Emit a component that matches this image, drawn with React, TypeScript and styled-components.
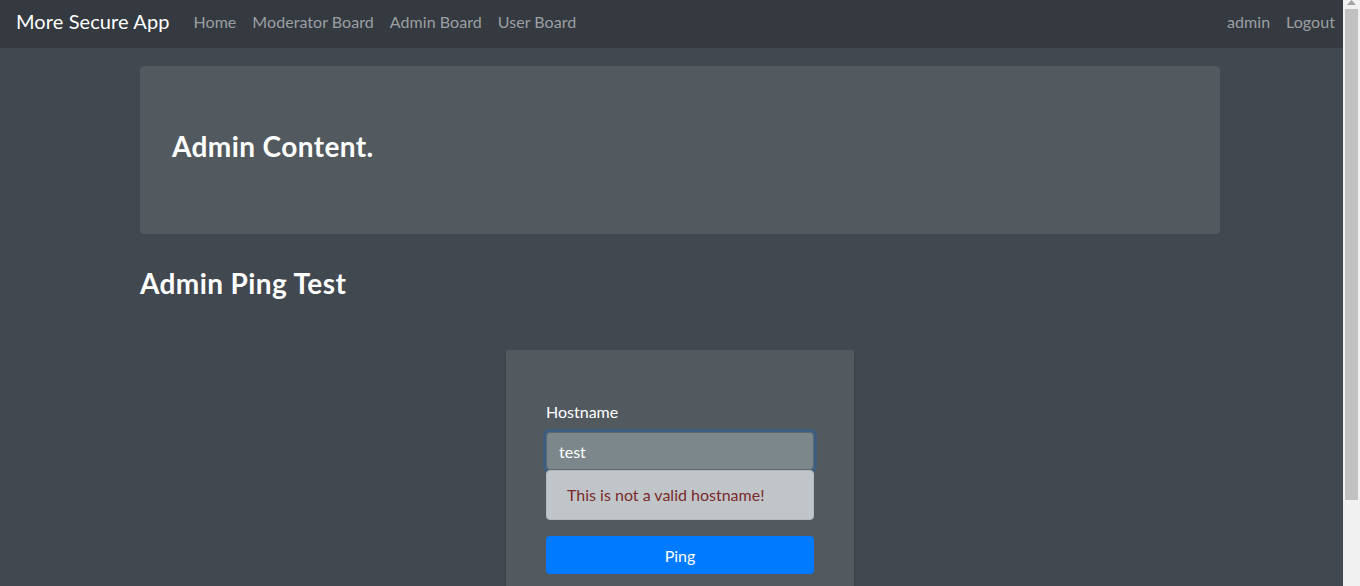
import React from "react";
import styled, { createGlobalStyle } from "styled-components";

const GlobalStyle = createGlobalStyle`
  html, body {
    margin: 0;
    padding: 0;
    overflow: hidden;
    background: #42484f;
  }
  * { box-sizing: border-box; }
  body {
    font-family: Lato, "Open Sans", "Noto Sans", sans-serif;
    color: #e8e6e3;
  }
`;

const Frame = styled.div`
  display: flex;
  height: 586px;
  width: 1360px;
  overflow: hidden;
`;

const Page = styled.div`
  flex: 1;
  min-width: 0;
  background: #42484f;
  overflow: hidden;
`;

const Scrollbar = styled.div`
  width: 17px;
  background: #f1f1f1;
  display: flex;
  flex-direction: column;
  align-items: center;
`;

const ScrollButton = styled.div`
  height: 9px;
  width: 100%;
  display: flex;
  justify-content: center;
  align-items: flex-start;
`;

const ScrollThumb = styled.div`
  width: 13px;
  height: 491px;
  background: #c1c1c1;
`;

const Navbar = styled.nav`
  height: 48px;
  background: #343a40;
  display: flex;
  align-items: center;
  padding: 0 0 6px 16px;
`;

const Brand = styled.a`
  font-size: 20px;
  color: #ffffff;
  margin-right: 16px;
  white-space: nowrap;
  letter-spacing: 0.1px;
`;

const NavList = styled.div<{ $right?: boolean }>`
  display: flex;
  align-items: center;
  margin-left: ${(p) => (p.$right ? "auto" : "0")};
`;

const NavLink = styled.a`
  font-size: 16px;
  color: #9c9fa2;
  padding: 8px;
  white-space: nowrap;
  letter-spacing: 0.05px;
`;

const Container = styled.main`
  width: 1080px;
  margin-left: 140px;
  padding-top: 18px;
`;

const Jumbotron = styled.header`
  background: #52595f;
  border-radius: 4px;
  padding: 64px 32px;
  margin-bottom: 32px;
`;

const Heading = styled.h3<{ $gap?: number; $line?: number }>`
  font-size: 28px;
  font-weight: 700;
  line-height: ${(p) => p.$line ?? 32}px;
  letter-spacing: 0.4px;
  margin: 0 0 ${(p) => p.$gap ?? 0}px;
  color: #ffffff;
`;

const Card = styled.div`
  width: 348px;
  margin: 50px auto 25px;
  padding: 50px 40px 40px;
  background: #52595f;
  border-radius: 2px;
  box-shadow: 0 2px 2px rgba(0, 0, 0, 0.3);
`;

const Label = styled.label`
  display: block;
  font-size: 16px;
  line-height: 24px;
  margin-bottom: 8px;
  color: #ffffff;
`;

const Input = styled.input`
  display: block;
  width: 100%;
  height: 38px;
  padding: 6px 12px;
  font-family: inherit;
  font-size: 16px;
  color: #ffffff;
  background: #7b878b;
  border: 1px solid #5e6a72;
  border-radius: 4px;
  box-shadow: 0 0 0 3px #3d5d80;
  outline: none;
`;

const Alert = styled.div`
  padding: 12px 20px;
  font-size: 16px;
  line-height: 24px;
  color: #7b2a2a;
  background: #c0c5c9;
  border: 1px solid #b4babe;
  border-radius: 4px;
  margin-bottom: 16px;
`;

const Button = styled.button`
  display: block;
  width: 100%;
  height: 38px;
  font-family: inherit;
  font-size: 16px;
  color: #ffffff;
  background: #007bff;
  border: none;
  border-radius: 4px;
`;

export default function App() {
  return (
    <>
      <GlobalStyle />
      <Frame>
        <Page>
          <Navbar>
            <Brand>More Secure App</Brand>
            <NavList>
              <NavLink>Home</NavLink>
              <NavLink>Moderator Board</NavLink>
              <NavLink>Admin Board</NavLink>
              <NavLink>User Board</NavLink>
            </NavList>
            <NavList $right>
              <NavLink>admin</NavLink>
              <NavLink>Logout</NavLink>
            </NavList>
          </Navbar>
          <Container>
            <Jumbotron>
              <Heading $gap={8}>Admin Content.</Heading>
            </Jumbotron>
            <Heading $line={34}>Admin Ping Test</Heading>
            <Card>
              <Label>Hostname</Label>
              <Input value="test" readOnly />
              <Alert>This is not a valid hostname!</Alert>
              <Button>Ping</Button>
            </Card>
          </Container>
        </Page>
        <Scrollbar>
          <ScrollButton>
            <svg width="9" height="5" viewBox="0 0 9 5">
              <polygon points="4.5,0 9,5 0,5" fill="#a3a3a3" />
            </svg>
          </ScrollButton>
          <ScrollThumb />
        </Scrollbar>
      </Frame>
    </>
  );
}
